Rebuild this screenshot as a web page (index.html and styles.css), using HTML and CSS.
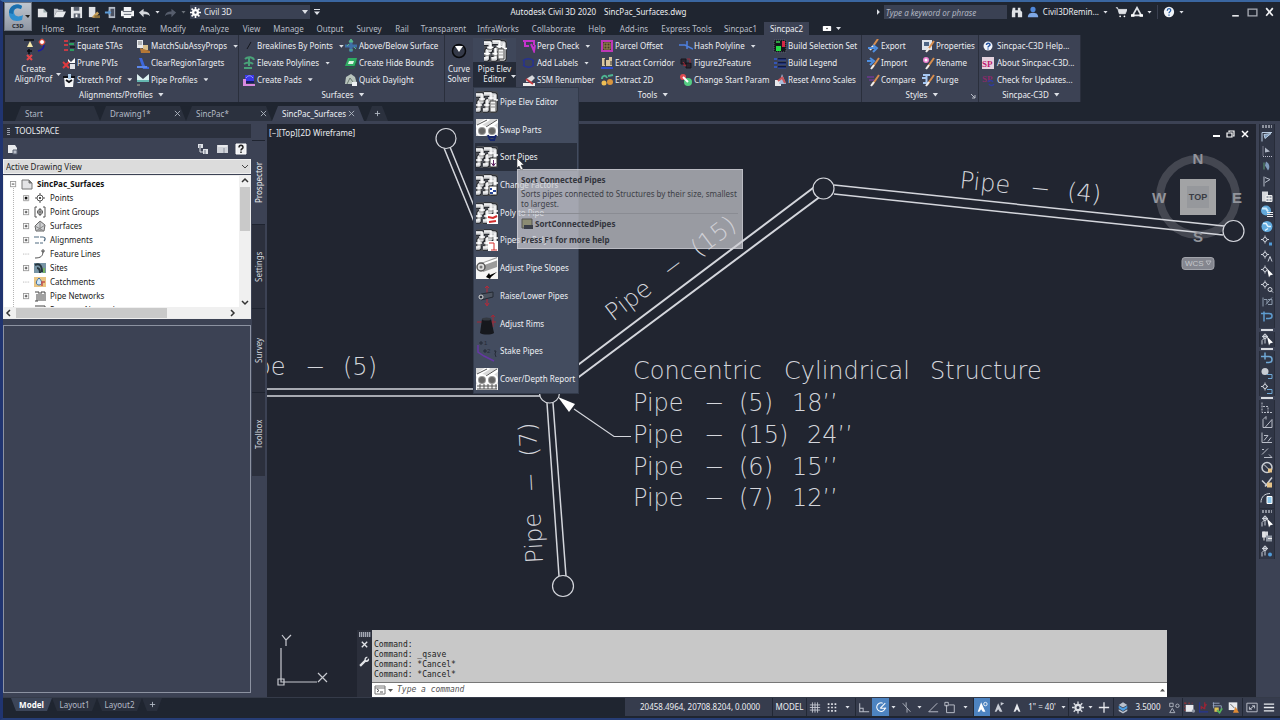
FILE: index.html
```html
<!DOCTYPE html>
<html lang="en">
<head>
<meta charset="utf-8">
<title>Autodesk Civil 3D 2020</title>
<link rel="stylesheet" href="styles.css">
</head>
<body>
<svg class="defs" aria-hidden="true">
  <symbol id="pipe" viewBox="0 0 22 22"><rect width="22" height="22" rx="2" fill="#4b4e55"/><g fill="none" stroke-linejoin="round"><path d="M0 4h6v7H3v8H0M8 3h7v7h-4v9H7M15 4h4v15h-4" stroke="#17191e" stroke-width="5"/><path d="M0 4h6v7H3v8H0M8 3h7v7h-4v9H7M15 4h4v15h-4" stroke="#d6d7d9" stroke-width="3.500"/><path d="M0 3h6v7H3v8H0M8 2h7v7h-4v9H7M19 4v15" stroke="#fff" stroke-width="1.200"/><path d="M3 8h6M12 7h6M0 14h6M8 14h6M17 9h5" stroke="#fff" stroke-width="1.500"/><path d="M3 10h6M12 9h6M0 16h6M8 16h6" stroke="#777" stroke-width=".8"/></g></symbol>
  <symbol id="tubes" viewBox="0 0 22 22"><rect width="22" height="22" fill="#d9d9d9"/><path d="M0 8 13 0M10 9 22 2M4 5l9-6M15 7l7-5" stroke="#fff" stroke-width="3"/><path d="M1 6 11 1M10 8 21 1" stroke="#555"/><circle cx="6" cy="12" r="5" fill="#999" stroke="#fff" stroke-width="2"/><circle cx="16" cy="12" r="5" fill="#999" stroke="#fff" stroke-width="2"/><circle cx="6" cy="12" r="3" fill="#666"/><circle cx="16" cy="12" r="3" fill="#666"/></symbol>
  <symbol id="pick" viewBox="0 0 14 14"><path d="M5 1v4M2 4h6M5 5 2 8v4M5 6v5" stroke="#c9ced8" fill="none"/><circle cx="5" cy="4" r="2" fill="none" stroke="#d4d8df"/></symbol>
  <symbol id="pen" viewBox="0 0 14 14"><path d="M6 12 13 2" stroke="#d88e4e" stroke-width="2"/><path d="m5 13 3-4" stroke="#eee" stroke-width="2"/></symbol>
  <symbol id="plusbox" viewBox="0 0 8 8"><rect x=".5" y=".5" width="6" height="6" fill="#fff" stroke="#999"/><path d="M2 3.500h3M3.500 2v3" stroke="#333"/></symbol>
</svg>

<header class="top">
  <button class="app" aria-label="Application menu"><svg width="26" height="27" viewBox="0 0 26 27"><path d="M17 3C10-1 4 4 4 10s5 10 13 7l1-5c-5 3-9 1-9-3s4-5 7-3z" fill="#2f8fd0"/><path d="M17 3C10-1 4 4 4 10l4 1c0-5 3-7 8-5z" fill="#1a6fae"/><path d="m20 12h5l-2 3z" fill="#222"/><text x="7" y="25" class="app-code">C3D</text></svg></button>
  <div class="toprows">
    <div class="titlebar">
      <div class="qat">
        <button aria-label="New"><svg viewBox="0 0 14 14"><path d="M2 3h6l4 4v5H2z" fill="#e3e5e8"/><path d="M8 3v4h4" fill="#9aa"/></svg></button>
        <button aria-label="Open"><svg viewBox="0 0 14 14"><path d="M1 3h4l1 1h5v2H4l-3 6z" fill="#c4c7cd"/><path d="M4 6h10l-3 6H1z" fill="#e8eaed"/></svg></button>
        <button aria-label="Save"><svg viewBox="0 0 14 14"><path d="M1 1h12v12H1z" fill="#e3e5e8"/><path d="M4 1h6v4H4zM4 8h7v5H4z" fill="#59606e"/><path d="M6 9h2v3H6z" fill="#fff"/></svg></button>
        <button aria-label="Save as"><svg viewBox="0 0 14 14"><path d="M2 1h7v11H2z" fill="#dfe1e5"/><path d="m5 12 6-6 2 2-5 5z" fill="#c9a15a"/><path d="M8 10h6v3H8z" fill="#8b6f3c"/></svg></button>
        <button aria-label="Import"><svg viewBox="0 0 14 14"><path d="M5 1h7v12H5z" fill="#b5bcc8"/><path d="M7 3h4v8H7z" fill="#4b5263"/><path d="M1 6h4V4l3 3-3 3V8H1z" fill="#5c9ad6"/></svg></button>
        <button aria-label="Plot"><svg viewBox="0 0 14 14"><path d="M3 1h8v4H3zM0 5h14v6H0zM3 10h8v3H3z" fill="#f3f4f6"/><path d="M2 6h10M3 9h8" stroke="#555d6b"/></svg></button>
        <button aria-label="Undo"><svg viewBox="0 0 14 14"><path d="M1 7l5-4v3c4 0 6 1 7 5-2-2-4-2-7-2v3z" fill="#d5d8dd"/></svg></button>
        <i class="dn small"></i>
        <button aria-label="Redo"><svg viewBox="0 0 14 14"><path d="M13 7 8 3v3C4 6 2 7 1 11c2-2 4-2 7-2v3z" fill="#565d6c"/></svg></button>
        <i class="dn small dim"></i>
        <button class="workspace"><svg viewBox="0 0 14 14"><circle cx="7" cy="7" r="3" fill="none" stroke="#fff" stroke-width="3"/><path d="M7 0v3M7 11v3M0 7h3M11 7h3M2 2l2 2M10 10l2 2M2 12l2-2M10 4l2-2" stroke="#fff" stroke-width="2"/></svg><span>Civil 3D</span><i class="dn"></i></button>
        <i class="dn bar"></i>
      </div>
      <div class="title"><span>Autodesk Civil 3D 2020</span><span>SincPac_Surfaces.dwg</span></div>
      <div class="info">
        <i class="rt"></i>
        <input class="search" type="text" placeholder="Type a keyword or phrase" aria-label="Search help">
        <button aria-label="Find"><svg viewBox="0 0 14 14"><path d="M2 2h3v3h3V2h3v3l2 2v6H8V8H5v5H1V7z" fill="#dfe2e6"/></svg></button>
        <button class="user"><svg viewBox="0 0 14 14"><circle cx="7" cy="4" r="3" fill="#4f86d8"/><path d="M1 13c0-4 3-5 6-5s6 1 6 5z" fill="#7fa8e6"/></svg><span>Civil3DRemin...</span><i class="dn small"></i></button>
        <button class="cart" aria-label="App store"><svg viewBox="0 0 14 14"><path d="M1 2h2l2 7h7l2-5H4" fill="#dfe2e6" stroke="#dfe2e6"/><circle cx="6" cy="12" r="1" fill="#fff"/><circle cx="11" cy="12" r="1" fill="#fff"/></svg></button>
        <button aria-label="Autodesk app"><svg viewBox="0 0 14 14"><path d="m7 2 5 9H2z" fill="none" stroke="#dfe2e6" stroke-width="2"/><path d="M0 11h4M10 11h4" stroke="#fff" stroke-width="3"/></svg></button>
        <i class="dn small"></i><i class="vsep"></i>
        <button aria-label="Help"><svg viewBox="0 0 14 14"><circle cx="7" cy="7" r="6" fill="#f1f4f8"/><path d="M5 5.500c0-3 4-3 4-.5 0 2-2 1.500-2 3.500M7 10v1.500" fill="none" stroke="#275fa8" stroke-width="1.500"/></svg></button>
        <i class="dn small"></i>
      </div>
      <div class="win">
        <button aria-label="Minimize"><svg viewBox="0 0 10 10"><path d="M2 8h6" stroke="#e5e7ea" stroke-width="1.500"/></svg></button>
        <button aria-label="Maximize"><svg viewBox="0 0 10 10"><path d="M1 2h8v6H1z" fill="none" stroke="#a9adb5" stroke-width="1.200"/></svg></button>
        <button aria-label="Close"><svg viewBox="0 0 10 10"><path d="m2 1 6 7M8 1 2 8" stroke="#f1f2f4" stroke-width="1.500"/></svg></button>
      </div>
    </div>
    <nav class="tabs">
      <button>Home</button><button>Insert</button><button>Annotate</button><button>Modify</button><button>Analyze</button><button>View</button><button>Manage</button><button>Output</button><button>Survey</button><button>Rail</button><button>Transparent</button><button>InfraWorks</button><button>Collaborate</button><button>Help</button><button>Add-ins</button><button>Express Tools</button><button>Sincpac1</button><button class="on">Sincpac2</button>
      <button class="ribbon-min" aria-label="Minimize ribbon"><svg viewBox="0 0 10 6"><rect width="10" height="6" rx="1" fill="#fff"/><circle cx="5" cy="3" r="1" fill="#333"/></svg><i class="dn small"></i></button>
    </nav>
  </div>
</header>

<section class="ribbon">
  <div class="panel p-align">
    <div class="cmds">
      <button class="big create"><svg width="24" height="24" viewBox="0 0 24 24"><path d="M2 2h10M7 11v5M5 13h5" stroke="#0b0c10" stroke-width="1.500"/><path d="m8 3 3 6H5z" fill="#f5e9ab"/><path d="m5 17 5 5M10 17l-5 5" stroke="#e4464a" stroke-width="2"/><path d="m20 0 1 3 3 1-3 1-1 3-1-3-3-1 3-1z" fill="#ff9a8a"/><circle cx="20" cy="4" r="2.500" fill="#fff" stroke="#e43a2a"/><path d="M22 7c0 3-2 5-6 6" stroke="#1919a8" stroke-width="1.500" fill="none"/></svg><span>Create<br>Align/Prof</span><i class="dn small"></i></button>
      <div class="col">
        <button><svg viewBox="0 0 14 14"><path d="M2 2h4M2 6h4M2 11h4" stroke="#c33b45" stroke-width="2"/><path d="M8 2h5M8 8h5" stroke="#1d1f27" stroke-width="2"/><path d="M7 5h5M8 11h4" stroke="#2b9e5f" stroke-width="2"/></svg>Equate STAs</button>
        <button><svg viewBox="0 0 14 14"><path d="M6 3l3 3 4-4v5H6z" fill="#fff"/><path d="M8 8h5v5H8z" fill="#e1e3e8"/><path d="m1 6 6 6M7 6l-6 6" stroke="#e03b3f" stroke-width="2"/></svg>Prune PVIs</button>
        <button><svg viewBox="0 0 14 14"><path d="M2 4h10l-1 10H3z" fill="#f5f6f8"/><path d="M1 4h5M8 4h5M4 7l3 2 3-2" stroke="#101218" stroke-width="2" fill="none"/><path d="M6 1h3v5H6z" fill="#a9c9e6"/></svg>Stretch Prof<i class="dn small"></i></button>
      </div>
      <div class="col">
        <button><svg viewBox="0 0 14 14"><path d="M1 1h6v8H1z" fill="#e8eaee"/><path d="M2 3h4M2 5h4" stroke="#777"/><path d="M7 6h5v5H7z" fill="#d9bf8c"/><path d="m4 9 10 3v2H5z" fill="#b57836"/></svg>MatchSubAssyProps<i class="dn small"></i></button>
        <button><svg viewBox="0 0 14 14"><path d="M3 2h3l3 8 4 1v2H7z" fill="#3c67dd"/><path d="M1 11h10" stroke="#5c87ea" stroke-width="2"/></svg>ClearRegionTargets</button>
        <button><svg viewBox="0 0 14 14"><path d="M1 1v8h12V1L7 6z" fill="#dcf0f0"/><path d="M1 7h12v2H1z" fill="#65b7b1"/><path d="M1 12h3" stroke="#777" stroke-width="2"/></svg>Pipe Profiles<i class="dn small"></i></button>
      </div>
    </div>
    <button class="ptitle">Alignments/Profiles<i class="dn"></i></button>
  </div>
  <div class="panel p-surf">
    <div class="cmds">
      <div class="col">
        <button><svg viewBox="0 0 14 14"><path d="m5 10 4-7" stroke="#14161d"/></svg>Breaklines By Points<i class="dn small"></i></button>
        <button><svg viewBox="0 0 14 14"><path d="M3 3c3-3 8-2 9 1M7 1v9M2 8c3-2 7-2 9 0M2 12h8" stroke="#49a178" stroke-width="2" fill="none"/></svg>Elevate Polylines<i class="dn small"></i></button>
        <button><svg viewBox="0 0 14 14"><path d="M3 2h9v6H3z" fill="#3b37e8"/><path d="M4 5c2-3 5-3 7 0" stroke="#9da2ff" fill="none"/><path d="M1 6h3v5h9v2H1z" fill="#d98ae0"/><path d="M4 9h8" stroke="#181a66" stroke-width="2"/></svg>Create Pads<i class="dn small"></i></button>
      </div>
      <div class="col">
        <button><svg viewBox="0 0 14 14"><path d="M7 1v12M1 7h12" stroke="#3f6fa6" stroke-width="3"/><path d="m7 0 2 3H5zM3 7l2-2M10 8l2 2M5 11h4" fill="#57b98b" stroke="#57b98b"/></svg>Above/Below Surface</button>
        <button><svg viewBox="0 0 14 14"><path d="M4 2h9l-2 8H1z" fill="#2fae63"/><path d="M5 5h5l-1 3H4z" fill="#dff7e6"/><path d="M1 12h9l3-7" stroke="#176e3a" fill="none"/></svg>Create Hide Bounds</button>
        <button><svg viewBox="0 0 14 14"><path d="m2 4 5-3 4 3 2 7H1z" fill="#b8c4bd"/><path d="m3 11 3-6 3 4" stroke="#68776e" fill="none"/><path d="M8 9h5v4H8z" fill="#eef1f4"/></svg>Quick Daylight</button>
      </div>
    </div>
    <button class="ptitle">Surfaces<i class="dn"></i></button>
  </div>
  <div class="panel p-tools">
    <div class="cmds">
      <button class="big curve"><svg width="24" height="24" viewBox="0 0 24 24"><circle cx="12" cy="13" r="6.500" fill="#343948" stroke="#08090c" stroke-width="1.500"/><path d="M8 8h8l-4 6z" fill="#fff"/></svg><span>Curve<br>Solver</span></button>
      <div class="split">
        <button class="big pressed"><svg width="24" height="24" viewBox="0 0 24 24"><use href="#pipe" x="1" y="1" width="23" height="23"/><path d="M15 11h6v10h-6z" fill="#f4f4f4" stroke="#444"/><path d="M16 14h4M16 17h4" stroke="#999"/></svg><span>Pipe Elev<br>Editor</span><i class="dn small"></i></button>
        <div class="menu" role="menu">
          <button role="menuitem"><svg viewBox="0 0 22 22"><use href="#pipe"/><path d="M14 10h6v11h-6z" fill="#f1f1f1" stroke="#444"/><path d="M15 13h4M15 16h4" stroke="#888"/></svg>Pipe Elev Editor</button>
          <button role="menuitem"><svg viewBox="0 0 22 22"><use href="#tubes"/><path d="M0 17h22v5H0z" fill="#434c5e"/><path d="M12 18h8M14 21h5M12 16l2 5M20 16l-2 5" stroke="#18286e" stroke-width="2"/></svg>Swap Parts</button>
          <button role="menuitem" class="hot"><svg viewBox="0 0 22 22"><use href="#pipe"/><path d="M14 12h7v9h-7z" fill="#fff" stroke="#333"/><path d="M17.500 14v6M15.500 17l2 3 2-3" stroke="#5e2461" fill="none"/></svg>Sort Pipes</button>
          <button role="menuitem"><svg viewBox="0 0 22 22"><use href="#pipe"/><path d="M13 12h8v9h-8z" fill="#fff" stroke="#333"/><path d="M14 14h2v2h-2zM17 16h3v2h-3zM14 18h3v2h-3z" fill="#2a4799"/></svg>Change Factors</button>
          <button role="menuitem"><svg viewBox="0 0 22 22"><use href="#pipe"/><path d="M11 12h11v10H11z" fill="#fff"/><path d="m12 15 5 1 4-2M13 20l7-1" stroke="#d32c2c" stroke-width="2" fill="none"/></svg>Poly to Pipe</button>
          <button role="menuitem"><svg viewBox="0 0 22 22"><use href="#pipe"/><path d="M12 12h10v10H12z" fill="#fff"/><path d="M13 14h5v7M15 21h6" stroke="#d32c2c" fill="none"/></svg>Pipes to Poly</button>
          <button role="menuitem"><svg viewBox="0 0 22 22"><path d="M0 0h22v22H0z" fill="#f5f5f5"/><path d="M5 6 21 0v10L7 15z" fill="#9b9b9b"/><path d="M8 7 22 2" stroke="#fff" stroke-width="2"/><circle cx="5" cy="10" r="4" fill="#ddd" stroke="#555" stroke-width="1.500"/><circle cx="5" cy="10" r="1.500" fill="#777"/><path d="m10 20 3-4 1 2 7-3-6 5-1 2z" fill="#000"/></svg>Adjust Pipe Slopes</button>
          <button role="menuitem"><svg viewBox="0 0 22 22"><path d="M11 1v19M9 3l2-2 2 2M9 18l2 3 2-3" stroke="#b82939" fill="none"/><path d="M5 9 17 7v5L5 15z" fill="#4c535f" stroke="#252a34"/><circle cx="5" cy="12" r="2" fill="#2a2f3a" stroke="#ddd"/></svg>Raise/Lower Pipes</button>
          <button role="menuitem"><svg viewBox="0 0 22 22"><path d="M1 9h19M17 2v12M15 4l2-2 2 2" stroke="#a52634" fill="none"/><path d="M6 6h9l3 14c-3 2-11 2-14 0z" fill="#16181d"/><ellipse cx="10.500" cy="6" rx="4.500" ry="1.500" fill="#343941"/></svg>Adjust Rims</button>
          <button role="menuitem"><svg viewBox="0 0 22 22"><path d="M2 5v7l6 4 10 5" stroke="#6637a4" stroke-width="1.500" fill="none"/><path d="M3 3h4M5 1v4M7 11h4M9 9v4M18 11h2l-1 3 1 3" stroke="#252a37" fill="none"/><text x="8" y="5" class="tiny">1</text><text x="11" y="13" class="tiny">2</text></svg>Stake Pipes</button>
          <button role="menuitem"><svg viewBox="0 0 22 22"><use href="#tubes"/><path d="M0 16h22v6H0z" fill="#f5f5f5"/><path d="M1 18h20M1 21h20M4 16v5M8 16v5M12 16v5M16 16v5M20 16v5" stroke="#555"/></svg>Cover/Depth Report</button>
        </div>
      </div>
      <div class="col">
        <button><svg viewBox="0 0 14 14"><path d="M1 2h11v4M3 2v5h4M9 5l3 7 1-6" stroke="#c433cc" stroke-width="2" fill="none"/></svg>Perp Check<i class="dn small"></i></button>
        <button><svg viewBox="0 0 14 14"><path d="M1 5c2-3 8-3 11 0M1 9c3 3 8 3 11 0M2 4v6M11 4v6" stroke="#263291" stroke-width="1.500" fill="none"/></svg>Add Labels<i class="dn small"></i></button>
        <button><svg viewBox="0 0 14 14"><path d="M1 10h12v3H1z" fill="#eee"/><path d="M4 9c0-5 5-5 6-7l3 3-4 4z" fill="#d9dadd"/><path d="m4 6 7 5" stroke="#c53b41" stroke-width="2"/></svg>SSM Renumber</button>
      </div>
      <div class="col">
        <button><svg viewBox="0 0 14 14"><path d="M2 2h10v10H2z" fill="#443a28" stroke="#bd38b7" stroke-width="2"/><path d="M4 4h6v6H4zM7 4v6M4 7h6" stroke="#9a8553" fill="none"/></svg>Parcel Offset</button>
        <button><svg viewBox="0 0 14 14"><path d="M2 2h3v8H2zM6 4h3v6H6zM9 1h3v9H9z" fill="#d9c59d"/><path d="M5 3v6M11 5v4" stroke="#333"/><path d="M1 12h12" stroke="#2e4ccc" stroke-width="2"/></svg>Extract Corridor</button>
        <button><svg viewBox="0 0 14 14"><path d="M2 6c0-4 4-4 5-1M8 3l5-1" stroke="#4fb592" stroke-width="2" fill="none"/><circle cx="4" cy="10" r="2.500" fill="#f0bf55"/><circle cx="10" cy="9" r="3" fill="#d8953e"/></svg>Extract 2D</button>
      </div>
      <div class="col">
        <button><svg viewBox="0 0 14 14"><path d="M0 6h6l8 4M8 2v8" stroke="#4e80df" stroke-width="1.500" fill="none"/></svg>Hash Polyline<i class="dn small"></i></button>
        <button><svg viewBox="0 0 14 14"><path d="M2 3h5v5H2zM7 7h5v5H7z" fill="#2a2530" stroke="#17151b"/><path d="m4 6 3 4-3-1M8 3h3v4" stroke="#a32937" fill="none"/></svg>Figure2Feature</button>
        <button><svg viewBox="0 0 14 14"><circle cx="4" cy="4" r="3" fill="#e04b52"/><circle cx="9" cy="9" r="4" fill="#54cd82"/><path d="m4 4 5 5" stroke="#fff" stroke-width="2"/></svg>Change Start Param</button>
      </div>
      <div class="col">
        <button><svg viewBox="0 0 14 14"><path d="M1 1h12v12H1z" fill="#15171d" stroke="#5b6070" stroke-dasharray="1"/><path d="M3 7h5v5H3z" fill="#25db45"/><path d="M9 2h3v6H9z" fill="#d42745"/><path d="M3 3h4" stroke="#31a044" stroke-width="2"/></svg>Build Selection Set</button>
        <button><svg viewBox="0 0 14 14"><path d="M1 2h3v2H1zM1 6h3v2H1zM1 10h3v2H1z" fill="#3556b6"/><path d="M5 3h8M5 7h8M5 11h8" stroke="#101940" stroke-width="2"/><path d="M5 4h8M5 8h8M5 12h8" stroke="#2f4ba7"/></svg>Build Legend</button>
        <button><svg viewBox="0 0 14 14"><path d="M2 7h6v6H2z" fill="#e7e8ec"/><path d="m9 1 4 10H6z" fill="#a8bddb"/><path d="m9 4 3 6M5 8l5-4" stroke="#cc5459" stroke-width="2"/></svg>Reset Anno Scales</button>
      </div>
    </div>
    <button class="ptitle">Tools<i class="dn"></i></button>
  </div>
  <div class="panel p-styles">
    <div class="cmds">
      <div class="col">
        <button><svg viewBox="0 0 14 14"><use href="#pen" x="-1" y="-2"/><path d="M2 9h7M7 6l4 3-4 4" stroke="#4f8fe0" stroke-width="2" fill="none"/></svg>Export</button>
        <button><svg viewBox="0 0 14 14"><use href="#pen"/><path d="M1 5h5M4 2l4 3-4 4" stroke="#4f8fe0" stroke-width="2" fill="none"/></svg>Import</button>
        <button><svg viewBox="0 0 14 14"><use href="#pen"/><path d="M1 4h7M3 7h5" stroke="#6c3b91" stroke-width="1.500"/></svg>Compare</button>
      </div>
      <div class="col">
        <button><svg viewBox="0 0 14 14"><path d="M1 1h10v10H1z" fill="#dfe3ea"/><path d="M3 3h5v4H3z" fill="#4d6484"/><use href="#pen"/></svg>Properties</button>
        <button><svg viewBox="0 0 14 14"><circle cx="5" cy="4" r="3" fill="#ee7fd0"/><circle cx="5" cy="4" r="1.500" fill="#fff"/><use href="#pen"/></svg>Rename</button>
        <button><svg viewBox="0 0 14 14"><path d="M2 2h7M5.500 2v8M2 10h6M1 5h4" stroke="#a6c7f2" stroke-width="2"/><use href="#pen"/></svg>Purge</button>
      </div>
    </div>
    <button class="ptitle">Styles<i class="dn"></i></button>
    <svg class="launcher" viewBox="0 0 6 6"><path d="m1 1 4 4M5 2v3H2" stroke="#b9bdc7" fill="none"/></svg>
  </div>
  <div class="panel p-sinc">
    <div class="cmds">
      <div class="col">
        <button><svg viewBox="0 0 14 14"><circle cx="6" cy="7" r="4.500" fill="#f2f5fa"/><path d="M4.500 6c0-2.500 3.500-2.500 3.500 0 0 1-2 1-2 2.500M6 9.500v1" fill="none" stroke="#2452a0" stroke-width="1.500"/></svg>Sincpac-C3D Help...</button>
        <button><svg viewBox="0 0 14 14"><path d="M0 1h12v12H0z" fill="#e5d3df"/><text x="0" y="11" class="sp">SP</text></svg>About Sincpac-C3D...</button>
        <button><svg viewBox="0 0 14 14"><text x="0" y="9" class="sp dim">SP</text><path d="M6 9c1-2 4-2 5 0M12 11c-1 2-4 2-5 0" stroke="#2f3c9c" stroke-width="1.500" fill="none"/></svg>Check for Updates...</button>
      </div>
    </div>
    <button class="ptitle">Sincpac-C3D<i class="dn"></i></button>
  </div>
</section>

<nav class="files">
  <button class="f-start">Start</button>
  <button class="f-doc">Drawing1*<svg class="x" viewBox="0 0 8 8"><path d="m1 1 6 6M7 1 1 7"/></svg></button>
  <button class="f-doc">SincPac*<svg class="x" viewBox="0 0 8 8"><path d="m1 1 6 6M7 1 1 7"/></svg></button>
  <button class="f-doc on">SincPac_Surfaces<svg class="x" viewBox="0 0 8 8"><path d="m1 1 6 6M7 1 1 7"/></svg></button>
  <button class="plus" aria-label="New drawing"><svg class="x" viewBox="0 0 8 8"><path d="M4 1v6M1 4h6"/></svg></button>
</nav>

<main class="work">
  <aside class="palette">
    <div class="pal-main">
      <h2><i class="griph"></i>TOOLSPACE</h2>
      <div class="pal-tools">
        <svg viewBox="0 0 12 12"><path d="M2 2h7l2 3v5H2z" fill="#e9ebee"/><path d="M7 7h4v4H7z" fill="#b9bec9" stroke="#555c6d"/></svg>
        <svg class="push" viewBox="0 0 12 12"><path d="M1 1h5v4H1zM6 6h5v5H6z" fill="#dfe2e7"/><path d="M3 5v4h3" stroke="#dfe2e7" fill="none"/><path d="M3 2v3M8 7v4" stroke="#6b7383"/></svg>
        <svg viewBox="0 0 12 12"><path d="M1 2h11v8H1z" fill="#cfd2d8"/><path d="M2 3h9" stroke="#fff"/><path d="M8 5v5" stroke="#8b909c"/></svg>
        <svg viewBox="0 0 12 12"><path d="M1 1h10v10H1z" fill="#f1f2f4" stroke="#fff"/><path d="M4 4.500c0-3 4-3 4 0 0 1.500-2 1-2 3M6 8.500V10" stroke="#222" stroke-width="1.500" fill="none"/></svg>
      </div>
      <div class="pick"><select class="view" aria-label="View"><option>Active Drawing View</option></select><svg viewBox="0 0 8 8"><path d="m1 2 3 3 3-3" fill="none" stroke="#444"/></svg></div>
      <div class="treebox">
        <ul class="tree">
          <li class="root"><svg class="ex" viewBox="0 0 8 8"><rect x=".5" y=".5" width="6" height="6" fill="#fff" stroke="#999"/><path d="M2 3.500h3" stroke="#333"/></svg><svg viewBox="0 0 12 12"><path d="M1 2h7l3 3v6H1z" fill="#e4e4e6" stroke="#777"/><path d="M8 2v3h3" fill="#777" stroke="#777"/></svg>SincPac_Surfaces</li>
          <li><svg class="ex" viewBox="0 0 8 8"><path d="M.5.500h6v6h-6z" fill="#fff" stroke="#999"/><path d="M2 2h3v3H2z" fill="#111"/></svg><svg viewBox="0 0 12 12"><path d="M6 1v10M1 6h10" stroke="#555"/><circle cx="6" cy="6" r="3" fill="#fff" stroke="#555"/><path d="M5 5h2v2H5z" fill="#555"/></svg>Points</li>
          <li><svg class="ex"><use href="#plusbox"/></svg><svg viewBox="0 0 12 12"><path d="M3 1H1v10h2M9 1h2v10H9" stroke="#555" fill="none"/><circle cx="6" cy="6" r="2.500" fill="#fff" stroke="#555"/><path d="M6 2v8M3 6h6" stroke="#555"/></svg>Point Groups</li>
          <li><svg class="ex"><use href="#plusbox"/></svg><svg viewBox="0 0 12 12"><path d="m1 6 5-5 5 4-1 6H2z" fill="#cfd1d3" stroke="#666"/><path d="M6 1v10M1 6l9 5M11 5 2 11" stroke="#888"/></svg>Surfaces</li>
          <li><svg class="ex"><use href="#plusbox"/></svg><svg viewBox="0 0 12 12"><path d="M0 3h5M6 3h3c2 0 3 2 1 4M9 9H6M5 9H1" stroke="#4f6a80" fill="none" stroke-width="1.200"/></svg>Alignments</li>
          <li><svg class="ex" viewBox="0 0 8 8"><path d="M0 3.500h8" stroke="#aaa" stroke-dasharray="1"/></svg><svg viewBox="0 0 12 12"><path d="M1 10c6 0 8-2 8-7M7 3h4M9 1v4" stroke="#555" fill="none"/></svg>Feature Lines</li>
          <li><svg class="ex"><use href="#plusbox"/></svg><svg viewBox="0 0 12 12"><path d="M0 1h12v10H0z" fill="#7794a5"/><path d="M1 3c4-2 7 0 7 7M3 6c2 0 3 2 3 5" stroke="#26363f" stroke-width="2" fill="none"/><path d="M9 6h2v5H9z" fill="#72b262"/></svg>Sites</li>
          <li><svg class="ex" viewBox="0 0 8 8"><path d="M0 3.500h8" stroke="#aaa" stroke-dasharray="1"/></svg><svg viewBox="0 0 12 12"><path d="M0 1h12v10H0z" fill="#e9c584"/><path d="M5 2c4 4 3 7 0 7s-4-3 0-7z" fill="#cfe7fa" stroke="#3d6e9f"/><path d="M8 10V6h3" stroke="#c5534b" stroke-width="1.500" fill="none"/></svg>Catchments</li>
          <li><svg class="ex"><use href="#plusbox"/></svg><svg viewBox="0 0 12 12"><path d="M1 2h4v9M3 4v7M7 11V2h4v9M9 4v7M1 11h3" stroke="#444" fill="none"/></svg>Pipe Networks</li>
          <li><svg class="ex" viewBox="0 0 8 8"></svg><svg viewBox="0 0 12 12"><path d="M1 2h10v4M3 4v7M7 11V4" stroke="#444" fill="none"/></svg>Pressure Networks</li>
        </ul>
        <div class="vbar"><svg viewBox="0 0 10 10"><path d="m2 6 3-3 3 3" stroke="#333" stroke-width="1.500" fill="none"/></svg><i></i><svg viewBox="0 0 10 10"><path d="m2 4 3 3 3-3" stroke="#333" stroke-width="1.500" fill="none"/></svg></div>
        <div class="hbar"><svg viewBox="0 0 10 10"><path d="M6 2 3 5l3 3" stroke="#333" stroke-width="1.500" fill="none"/></svg><i></i><svg viewBox="0 0 10 10"><path d="m4 2 3 3-3 3" stroke="#333" stroke-width="1.500" fill="none"/></svg></div>
      </div>
      <div class="preview"></div>
    </div>
    <div class="vtabs"><button class="on">Prospector</button><button>Settings</button><button>Survey</button><button>Toolbox</button></div>
  </aside>

  <section class="canvas">
    <svg class="drawing" viewBox="267 124 989 573" preserveAspectRatio="xMinYMin slice" role="img" aria-label="Pipe network plan">
      <circle cx="1198" cy="197" r="38" fill="none" stroke="#444751" stroke-width="8"/>
      <g class="ln">
        <path d="M450 147 552 398M444 148 546 398" stroke-width="1.500"/>
        <path d="M546 389 817 185M552 397 829 190" stroke-width="2"/>
        <path d="M834 185 1224 226M834 194 1223 235" stroke-width="1.500"/>
        <path d="M267 389H545M267 396H545" stroke-width="1.500"/>
        <path d="M547 403 559 576M553 403 566 576" stroke-width="1.500"/>
        <path d="M574 409 614 436.500H631"/>
        <g fill="#212530"><circle cx="446" cy="138.500" r="10"/><circle cx="823.500" cy="188.500" r="10.500"/><circle cx="1233.500" cy="231" r="10.500"/><circle cx="549.500" cy="393" r="10"/><circle cx="563" cy="586" r="10.500"/></g>
        <path d="M281 648v34h36M278 679h6v6h-6z" stroke="#c8cad0"/>
        <path d="m282 635 4 5 5-5M286 640v6M318 673l9 9M327 673l-9 9" stroke="#c8cad0"/>
      </g>
      <path d="m558 397 17 7-6 8z" fill="#fff"/>
      <g class="cad">
        <text y="379"><tspan x="633">Concentric</tspan> <tspan x="784">Cylindrical</tspan> <tspan x="930">Structure</tspan></text>
        <text y="411"><tspan x="633">Pipe</tspan> <tspan x="704">−</tspan> <tspan x="739">(5)</tspan> <tspan x="792">18’’</tspan></text>
        <text y="443"><tspan x="633">Pipe</tspan> <tspan x="704">−</tspan> <tspan x="739">(15)</tspan> <tspan x="807">24’’</tspan></text>
        <text y="475"><tspan x="633">Pipe</tspan> <tspan x="704">−</tspan> <tspan x="739">(6)</tspan> <tspan x="792">15’’</tspan></text>
        <text y="506"><tspan x="633">Pipe</tspan> <tspan x="704">−</tspan> <tspan x="739">(7)</tspan> <tspan x="792">12’’</tspan></text>
        <text y="375"><tspan x="235">Pipe</tspan> <tspan x="305">−</tspan> <tspan x="343">(5)</tspan></text>
        <text transform="translate(959 188) rotate(6)"><tspan x="0">Pipe</tspan> <tspan x="71">−</tspan> <tspan x="108">(4)</tspan></text>
        <text transform="translate(613 322) rotate(-37)"><tspan x="0">Pipe</tspan> <tspan x="71">−</tspan> <tspan x="107">(15)</tspan></text>
        <text transform="translate(543 563) rotate(-93)"><tspan x="0">Pipe</tspan> <tspan x="71">−</tspan> <tspan x="107">(7)</tspan></text>
      </g>
      <rect x="1180" y="179" width="36" height="36" fill="#a2a3a5"/><rect x="1187" y="186" width="22" height="22" fill="#96989c"/>
      <g class="compass"><text x="1198" y="164">N</text><text x="1198" y="242">S</text><text x="1159" y="203">W</text><text x="1237" y="203">E</text></g>
      <text x="1198" y="200" class="cube">TOP</text>
      <rect x="1182" y="257.500" width="32" height="12" rx="3" fill="#84868f" stroke="#a2a4ab"/><text x="1185" y="266" class="wcs">WCS</text><path d="M1206 261h5l-2.500 4z" fill="none" stroke="#b8bac0"/>
    </svg>
    <div class="vp">[−][Top][2D Wireframe]</div>
    <div class="vpwin">
      <svg viewBox="0 0 10 10"><path d="M1 7h7" stroke="#fff" stroke-width="2"/></svg>
      <svg viewBox="0 0 10 10"><path d="M1 4h5v4H1zM3 3V2h5v5H7" fill="none" stroke="#fff" stroke-width="1.200"/></svg>
      <svg viewBox="0 0 10 10"><path d="m2 2 6 6M8 2 2 8" stroke="#fff" stroke-width="1.500"/></svg>
    </div>
    <div class="cmdwin">
      <div class="cmdside">
        <i class="gripd"></i>
        <svg viewBox="0 0 10 10"><path d="m2 2 6 6M8 2 2 8" stroke="#e2e4e8" stroke-width="1.500"/></svg>
        <svg class="wrench" viewBox="0 0 10 10"><path d="m1 9 5-5" stroke="#e2e4e8" stroke-width="2"/><path d="M8 1 6 3l1 1 2-2c1 3-2 4-4 3V3c0-2 2-3 3-2z" fill="#e2e4e8"/></svg>
      </div>
      <div class="cmdmain">
        <pre>Command:
Command: _qsave
Command: *Cancel*
Command: *Cancel*</pre>
        <div class="cmdline"><svg viewBox="0 0 20 10"><path d="M1 1h10v8H1zM1 3h10" fill="none" stroke="#777"/><path d="m3 4 2 1.500L3 7M6 7h3" stroke="#555" fill="none"/><path d="M14 4h5l-2.500 3z" fill="#555"/></svg><input type="text" placeholder="Type a command" aria-label="Command"><i class="up"></i></div>
      </div>
    </div>
  </section>

  <aside class="rail">
    <div class="rgroup g1"><i class="gripr"></i>
      <svg viewBox="0 0 14 14"><path d="M2 3h10M2 3v9M4 5l7-1-6 5z" stroke="#b9cbe0" fill="#7b98b8"/></svg>
      <svg viewBox="0 0 14 14"><path d="M3 2v10h9" stroke="#bbc" stroke-dasharray="1" fill="none"/><path d="m5 3 5 4-5 1z" fill="#aeb5c4"/></svg>
      <svg viewBox="0 0 14 14"><path d="M4 3v7" stroke="#8fa" stroke-opacity=".5"/><path d="M6 2c4 2 4 7 2 9L5 6z" fill="#7f9bbb"/></svg>
      <svg viewBox="0 0 14 14"><path d="M4 2v10M5 3l5 2-5 3" stroke="#b6bdca" fill="none"/></svg>
      <svg viewBox="0 0 14 14"><path d="M2 2h6v10H2z" fill="#d7d9de"/><path d="M6 6h6v6H6zM6 9h6M9 6v6" fill="#99a0ad" stroke="#eee"/></svg>
      <svg viewBox="0 0 14 14"><circle cx="6" cy="6" r="5" fill="#63a9db"/><path d="M2 4h4l2 3" stroke="#cdebff" stroke-width="2" fill="none"/><path d="M7 8h6M7 10h6M7 12h6" stroke="#eee"/></svg>
      <svg viewBox="0 0 14 14"><circle cx="7" cy="7" r="5.500" fill="#62abdf"/><path d="M3 4h3l2 3h3M5 11l3-2" stroke="#e0f3ff" stroke-width="1.500" fill="none"/></svg>
      <svg viewBox="0 0 14 14"><circle cx="5" cy="5" r="2" fill="none" stroke="#d4d8df"/><path d="M5 1v2M5 7v2M1 5h2M7 5h2" stroke="#c9ced8"/><path d="M9 8h3v3H9z" fill="#519bd8"/></svg>
      <svg viewBox="0 0 14 14"><circle cx="5" cy="5" r="2" fill="none" stroke="#d4d8df"/><path d="M5 1v2M5 7v2M1 5h2M7 5h2M8 12l2-5 2 5" stroke="#c9ced8" fill="none"/></svg>
      <svg viewBox="0 0 14 14"><circle cx="5" cy="5" r="2" fill="none" stroke="#d4d8df"/><path d="M5 1v2M5 7v2M1 5h2" stroke="#c9ced8"/><path d="m7 4 6 6-3 1-1 2z" fill="#fff"/></svg>
      <svg viewBox="0 0 14 14"><circle cx="5" cy="5" r="2" fill="none" stroke="#d4d8df"/><path d="M5 1v2M5 7v2M1 5h2M7 5h2M11 11l2 2" stroke="#c9ced8"/><circle cx="10" cy="10" r="2" fill="none" stroke="#d4d8df"/></svg>
      <svg viewBox="0 0 14 14"><path d="M3 3v9M4 5h3v4M6 10l6-7M8 5h4v5H8" stroke="#8d9bad" fill="none"/></svg>
      <svg viewBox="0 0 14 14"><path d="M4 2v10M1 4h8c4 0 4 5 0 5H6" stroke="#5e9bce" fill="none" stroke-width="1.500"/></svg>
    </div>
    <i class="rsep"></i>
    <div class="rgroup"><svg viewBox="0 0 14 14"><use href="#pick"/><path d="m7 4 6 6-3 1-1 2z" fill="#fff"/></svg></div>
    <i class="rsep"></i>
    <div class="rgroup">
      <svg viewBox="0 0 14 14"><path d="M5 1v7M1 5h8c4 0 4 6 0 6H6" stroke="#6fa8d6" fill="none" stroke-width="1.500"/></svg>
      <svg viewBox="0 0 14 14"><circle cx="5" cy="5" r="3.500" fill="#c9cdd4"/><path d="M7 8h5v4H8" stroke="#6fa8d6" fill="none"/></svg>
      <svg viewBox="0 0 14 14"><circle cx="5" cy="5" r="2" fill="none" stroke="#d4d8df"/><path d="M5 1v2M5 7v2M1 5h2M7 5h1" stroke="#c9ced8"/><path d="M7 8h5v4H7" stroke="#6fa8d6" fill="none"/></svg>
    </div>
    <i class="rsep"></i>
    <div class="rgroup g3">
      <svg viewBox="0 0 14 14"><path d="M2 2v10h10M3 6h5v6" stroke="#b9bdc8" fill="none" stroke-dasharray="2 1"/></svg>
      <svg viewBox="0 0 14 14"><path d="M3 12V4l3-3v3M3 12h9V4L5 12" stroke="#b9bdc8" fill="none"/></svg>
      <svg viewBox="0 0 14 14"><path d="M2 2v10h10M4 5h4l-4 5M8 11l3-4" stroke="#b9bdc8" fill="none"/></svg>
      <svg viewBox="0 0 14 14"><path d="M2 9 8 3M4 12h8l-3-3M2 4h2" stroke="#b9bdc8" fill="none"/></svg>
      <svg viewBox="0 0 14 14"><circle cx="7" cy="7" r="5" fill="none" stroke="#c9cdd4" stroke-width="1.500"/><path d="m4 4 5 5" stroke="#ddd"/><path d="M8 8h4v4H8z" fill="#e7c489"/></svg>
      <svg viewBox="0 0 14 14"><path d="m2 5 6 6M12 2 5 11" stroke="#c9cdd4" stroke-width="1.500"/><path d="M7 7h5v5H7z" fill="#e7c489"/></svg>
      <svg viewBox="0 0 14 14"><path d="M1 12c0-6 4-9 9-9" stroke="#c9cdd4" fill="none"/><path d="M7 6h5v7H7z" fill="#8ec8ec" stroke="#fff"/></svg>
    </div>
    <div class="rgroup"><i class="gripr"></i>
      <svg viewBox="0 0 14 14"><use href="#pick"/><path d="m7 4 6 6-3 1-1 2z" fill="#fff"/></svg>
      <svg viewBox="0 0 14 14"><path d="M2 2h6v6H2z" fill="#d7d9de"/><path d="M6 6h6v6H6z" fill="#8f96a3"/><path d="M4 2v9M8 9h4" stroke="#eee"/></svg>
      <svg viewBox="0 0 14 14"><use href="#pick"/><circle cx="10" cy="10" r="2" fill="#519bd8"/></svg>
    </div>
  </aside>

  <div class="tip" role="tooltip">
    <strong>Sort Connected Pipes</strong>
    <p>Sorts pipes connected to Structures by their size, smallest to largest.</p>
    <hr>
    <div class="cmdname"><svg viewBox="0 0 12 12"><path d="M1 1h10v9H1z" fill="#8c8c73" stroke="#555"/><path d="M3 7h9v4H3z" fill="#3b3f49"/></svg><strong>SortConnectedPipes</strong></div>
    <strong>Press F1 for more help</strong>
  </div>
  <svg class="pointer" viewBox="0 0 8 12"><path d="M0 0v10l2-2 2 4 2-1-2-4h3z" fill="#fff" stroke="#333" stroke-width=".5"/></svg>
</main>

<footer class="status">
  <nav class="layouts"><button class="on">Model</button><button>Layout1</button><button>Layout2</button><button class="add" aria-label="New layout"><svg class="x" viewBox="0 0 8 8"><path d="M4 1v6M1 4h6"/></svg></button></nav>
  <div class="stat">
    <span class="coords">20458.4964, 20708.8204, 0.0000</span>
    <button class="c34 sep">MODEL</button>
    <button class="c17 sep" aria-label="Grid"><svg viewBox="0 0 14 14"><path d="M4 1v12M7 1v12M10 1v12M1 4h12M1 7h12M1 10h12" stroke="#c9cdd6"/></svg></button>
    <button class="c17" aria-label="Snap"><svg viewBox="0 0 14 14"><path d="M2 3h11M2 7h11M2 11h11" stroke="#e2e4e9" stroke-width="2" stroke-dasharray="2 2"/></svg></button><i class="dn small c17"></i>
    <button class="c17 sep" aria-label="Ortho"><svg viewBox="0 0 14 14"><path d="M2 2v10h11M2 8h4v4" stroke="#b9bdc8" fill="none" stroke-width="1.200"/></svg></button>
    <button class="c17 lit" aria-label="Polar"><svg viewBox="0 0 14 14"><path d="M12 7a5 5 0 1 1-3-5M6 8l6-6M6 8h7" stroke="#fff" fill="none" stroke-width="1.200"/></svg></button><i class="dn small c10"></i>
    <button class="c17" aria-label="Isodraft"><svg viewBox="0 0 14 14"><path d="m2 2 9 10M6 1v5M7 8v5" stroke="#b9bdc8"/></svg></button><i class="dn small c10"></i>
    <button class="c17" aria-label="Tracking"><svg viewBox="0 0 14 14"><path d="M12 2 2 12h11" stroke="#c9cdd6" fill="none"/></svg></button>
    <button class="c17" aria-label="Object snap"><svg viewBox="0 0 14 14"><path d="M3 4v9h9V4H6M1 1h4v4H1z" stroke="#c9cdd6" fill="none"/></svg></button><i class="dn small c17"></i>
    <button class="c17 lit sep" aria-label="Annotation visibility"><svg viewBox="0 0 14 14"><path d="M6 1 2 12h2l2-3 2 3h3z" fill="#fff"/><circle cx="11" cy="3" r="2" fill="none" stroke="#fff"/></svg></button>
    <button class="c18" aria-label="Auto scale"><svg viewBox="0 0 14 14"><path d="M6 2 2 12h2l2-3 2 3h3zM9 1l4 1-4 3z" fill="#c9cdd6"/></svg></button>
    <button class="c17" aria-label="Annotation scale"><svg viewBox="0 0 14 14"><path d="M7 2 3 12h2l2-3 2 3h2z" fill="#e9ebef"/></svg></button>
    <button class="c34">1" = 40'</button><i class="dn small c10"></i>
    <button class="c18 sep" aria-label="Workspace"><svg viewBox="0 0 14 14"><circle cx="7" cy="7" r="3" fill="none" stroke="#dcdfe5" stroke-width="2.500"/><path d="M7 0v3M7 11v3M0 7h3M11 7h3M2 2l2 2M10 10l2 2M2 12l2-2M10 4l2-2" stroke="#dcdfe5" stroke-width="1.500"/></svg></button><i class="dn small c10"></i>
    <button class="c18" aria-label="Monitor"><svg viewBox="0 0 14 14"><path d="M7 1v12M1 7h12" stroke="#e9ebef" stroke-width="1.500"/></svg></button>
    <button class="c18 sep" aria-label="Surface level"><svg viewBox="0 0 14 14"><path d="m7 1 5 3-5 3-5-3zM2 9l5 3 5-3v2l-5 3-5-3z" fill="#b9c1cc"/><path d="m2 5 5 3 5-3v3l-5 3-5-3z" fill="#4d9ee0"/></svg></button>
    <button class="c34">3.5000</button>
    <button class="c17" aria-label="Quick properties"><svg viewBox="0 0 14 14"><path d="M2 2h4v4H2zM5 8l3 5H2z" stroke="#b9bdc8" fill="none"/><circle cx="11" cy="5" r="2" fill="none" stroke="#b9bdc8"/></svg></button>
    <button class="c14 sep" aria-label="Units"><svg viewBox="0 0 14 14"><path d="M2 4h9v8H2z" fill="#e9ebef"/><path d="M1 1v11M1 2h9" stroke="#a33" stroke-dasharray="2"/><circle cx="11" cy="11" r="2" fill="#8f96a3"/></svg></button>
    <button class="c14" aria-label="Quick view"><svg viewBox="0 0 14 14"><path d="M3 1v12M3 12h10" stroke="#263591" stroke-width="1.500"/><path d="M5 9V6l3 2 3-5M9 1v8" stroke="#962536" stroke-width="1.500" fill="none"/></svg></button>
    <button class="c14" aria-label="Hardware"><svg viewBox="0 0 14 14"><path d="M2 2h8M3 1v7M2 5h10v5" stroke="#9aa8c4" fill="none"/><path d="M4 7h5v5H4z" fill="#e0c156"/><path d="m7 10 3 3 3-5" stroke="#57b35a" stroke-width="2" fill="none"/></svg></button>
    <button class="c18" aria-label="Isolate"><svg viewBox="0 0 14 14"><path d="M2 1h10v9H2z" fill="#e9ebef"/><path d="m4 3 5 5" stroke="#555"/><path d="m10 6 4 7H7z" fill="#e08a35"/></svg></button>
    <button class="c18 sep" aria-label="Clean screen"><svg viewBox="0 0 14 14"><path d="M1 2h12v10H1zM4 9l6-4M7 5h3v3M4 6v3h3" stroke="#c9cdd6" fill="none"/></svg></button>
    <button class="c18" aria-label="Customize"><svg viewBox="0 0 14 14"><path d="M1 3h12M1 7h12M1 11h12" stroke="#e9ebef" stroke-width="1.500"/></svg></button>
  </div>
</footer>
</body>
</html>
```
FILE: styles.css
```css
* { box-sizing: border-box; }

body {
  margin: 0;
  height: 100vh;
  display: flex;
  flex-direction: column;
  overflow: hidden;
  background: #1f2530;
  border-top: 2px solid #3a66a0;
  border-left: 3px solid #203470;
  border-bottom: 2px solid #263d75;
  font: 8px/12px "Noto Sans", "Open Sans", sans-serif;
  color: #eceef2;
}

.defs { position: absolute; width: 0; height: 0; }

button {
  font: inherit;
  color: inherit;
  background: none;
  border: 0;
  padding: 0;
  margin: 0;
  white-space: nowrap;
}

svg { display: block; flex: none; }
input, select { font: inherit; }

/* small triangles */
.dn, .rt, .up { flex: none; width: 6px; height: 4px; background: #dde0e6; clip-path: polygon(0 0, 100% 0, 50% 100%); }
.dn.small { width: 5px; height: 3px; }
.dn.dim { opacity: .4; }
.rt { width: 3px; height: 6px; clip-path: polygon(0 0, 100% 50%, 0 100%); }
.up { width: 5px; height: 3px; background: #555; clip-path: polygon(50% 0, 100% 100%, 0 100%); }
.x { width: 7px; height: 7px; fill: none; stroke: #b4bac6; }

/* header */
.top { display: flex; flex: none; height: 33px; }
.app { width: 28px; height: 29px; margin-left: 1px; background: linear-gradient(#bfc6d0, #8f96a2); border: 1px solid #6b7280; }
.app-code { font-size: 6px; font-weight: 700; fill: #22262e; }
.toprows { flex: 1; min-width: 0; display: flex; flex-direction: column; }
.titlebar { display: flex; align-items: center; height: 20px; }
.qat { display: flex; align-items: center; gap: 4px; padding-left: 4px; }
.qat svg { width: 13px; height: 13px; }
.qat .workspace { display: flex; align-items: center; gap: 3px; width: 120px; height: 14px; padding: 0 2px 0 0; background: #3a4153; text-align: left; }
.workspace span { flex: 1; }
.workspace svg { width: 11px; height: 11px; }
.dn.bar { height: 6px; clip-path: polygon(0 0, 100% 0, 100% 18%, 0 18%, 0 40%, 100% 40%, 50% 100%, 0 40%); }
.title { flex: 1; display: flex; justify-content: center; gap: 8px; white-space: nowrap; }
.info { display: flex; align-items: center; gap: 4px; }
.info svg { width: 12px; height: 12px; }
.search { width: 123px; height: 14px; border: 0; padding: 0 2px; background: #3a4153; color: #ccc; font-style: italic; }
.search::placeholder { color: #b0b5c0; }
.user { display: flex; align-items: center; gap: 4px; }
.cart { margin-left: 3px; }
.vsep { width: 1px; height: 14px; margin: 0 1px; background: #3a4050; }
.win { display: flex; gap: 6px; padding: 0 5px 0 46px; }
.win svg { width: 11px; height: 11px; }

.tabs {
  display: grid;
  grid-template-columns: 36px 34px 48px 40px 43px 31px 43px 40px 38px 28px 55px 54px 57px 30px 44px 61px 47px 45px 45px;
  height: 13px;
  padding-left: 3px;
  line-height: 12px;
  color: #b9bec8;
}
.tabs .on { background: #3c4254; color: #eceef2; }
.ribbon-min { display: flex; align-items: center; justify-content: center; gap: 4px; }
.ribbon-min svg { width: 10px; height: 5px; }

/* ribbon */
.ribbon { display: flex; flex: none; padding-left: 2px; }
.panel { position: relative; background: #3c4254; padding-top: 3px; height: 67px; border-right: 1px solid #2a2f3c; }
.cmds { display: flex; height: 50px; }
.col { display: flex; flex: none; flex-direction: column; }
.col button { display: flex; align-items: center; height: 17px; gap: 1px; }
.col button .dn { margin-left: 5px; }
.col svg { width: 14px; height: 14px; }
.big { display: flex; flex: none; flex-direction: column; align-items: center; position: relative; width: 57px; line-height: 10px; }
.big .dn { position: absolute; right: 3px; bottom: 9px; }
.create { gap: 2px; }
.create .dn { right: 1px; bottom: 12px; }
.ptitle { display: flex; align-items: center; justify-content: center; gap: 5px; width: 100%; height: 13px; }
.p-align { width: 234px; }
.p-align .col:nth-child(2) { width: 74px; }
.p-surf { width: 206px; padding-left: 3px; }
.p-surf .col:first-child { width: 102px; }
.p-tools { width: 417px; }
.p-tools .col { width: 78px; }
.p-tools .col:nth-child(4) { width: 79px; }
.p-tools .col:nth-child(5) { width: 94px; }
.curve { width: 28px; gap: 2px; }
.split { position: relative; flex: none; width: 43px; margin-right: 6px; }
.pressed { width: 43px; height: 49px; gap: 2px; background: linear-gradient(#3f475a 48%, #252b38 48%); }
.pressed .dn { right: 0; }
.p-styles { width: 117px; padding-left: 4px; }
.p-styles .col:first-child { width: 55px; }
.p-sinc { width: 102px; padding-left: 3px; }
.launcher { position: absolute; right: 2px; bottom: 3px; width: 6px; height: 6px; }
.sp { font: 700 9px "Liberation Serif", serif; fill: #bf1b72; }
.sp.dim { fill: #8b2a6b; }
.tiny { font: 6px "Liberation Sans", sans-serif; fill: #252a37; }

.menu {
  position: absolute;
  z-index: 5;
  left: 0;
  top: 49px;
  width: 106px;
  height: 307px;
  display: grid;
  grid-template: repeat(11, minmax(0, 1fr)) / minmax(0, 1fr);
  padding: 0 1px;
  background: #434c5f;
  border: 1px solid #323a4a;
}
.menu button { display: flex; align-items: center; gap: 2px; padding-left: 1px; color: #eef0f4; }
.menu svg { width: 22px; height: 22px; }
.menu .hot { background: #292f3c; }

/* drawing tabs */
.files { display: flex; flex: none; height: 19px; padding: 4px 0 0 12px; color: #b4bac6; }
.files button { display: flex; align-items: center; height: 15px; padding: 0 5px 0 10px; background: #2b313e; clip-path: polygon(6px 0, calc(100% - 6px) 0, 100% 100%, 0 100%); }
.files .f-start { width: 85px; }
.files .f-doc { justify-content: space-between; width: 86px; }
.files .f-doc.on { width: 92px; background: #3c4254; color: #eef0f4; padding: 0 9px 0 10px; }
.files .plus { justify-content: center; padding: 0; width: 22px; margin-left: 2px; }

/* work area */
.work { position: relative; flex: 1; min-height: 0; display: flex; border-top: 3px solid #3c4254; }
.palette { display: flex; flex: none; width: 264px; background: #3c4254; }
.pal-main { flex: 1; display: flex; flex-direction: column; padding: 0 1px 4px 0; }
.palette h2 { display: flex; align-items: center; gap: 5px; height: 14px; margin: 0; padding-left: 4px; background: #2b303d; font: inherit; }
.griph { width: 3px; height: 7px; background: repeating-linear-gradient(#9aa0ad 0 1px, transparent 1px 2px); }
.pal-tools { display: flex; align-items: center; gap: 7px; height: 21px; padding: 0 4px 0 3px; }
.pal-tools svg { width: 12px; height: 12px; }
.push { margin-left: auto; }
.pick { position: relative; display: flex; }
.pick svg { position: absolute; right: 2px; top: 4px; width: 8px; height: 8px; pointer-events: none; }
.view { appearance: none; flex: 1; height: 15px; border: 1px solid #f0f0f0; border-radius: 0; padding: 0 2px; color: #222; background: #dcdcdc; }
.treebox { display: grid; grid-template-columns: 1fr 11px; grid-template-rows: 1fr 11px; height: 144px; margin: 1px 0 6px; background: #fff; border: 1px solid #eee; }
.tree { margin: 0; padding: 1px 0 0 6px; list-style: none; overflow: hidden; height: 131px; color: #222; background: repeating-linear-gradient(#b5b5b5 0 1px, transparent 1px 2px) 9px 12px / 1px 200px no-repeat; }
.tree li { display: flex; align-items: center; height: 14px; gap: 4px; padding-left: 13px; }
.tree .root { padding-left: 0; font-weight: 700; color: #111; }
.tree svg { width: 12px; height: 12px; }
.tree .ex { width: 7px; height: 7px; }
.vbar, .hbar { display: flex; align-items: center; background: #f0f0f0; }
.vbar { flex-direction: column; }
.vbar svg, .hbar svg { width: 10px; height: 10px; }
.vbar i { width: 10px; height: 44px; margin: 1px 0 auto; background: #c9c9c9; }
.hbar { grid-column: 1 / 3; padding-right: 13px; }
.hbar i { width: 151px; height: 10px; margin: 0 auto 0 2px; background: #c9c9c9; }
.preview { flex: 1; border: 1px solid #8c92a1; }
.vtabs { width: 14px; padding-top: 16px; margin-right: 1px; }
.vtabs button { display: block; width: 13px; height: 84px; padding: 0; line-height: 13px; writing-mode: vertical-rl; transform: rotate(180deg); background: #2c303d; border: 0 solid #1f2430; border-bottom-width: 1px; color: #d2d6de; text-align: center; }
.vtabs .on { background: #3c4254; color: #eceef2; }

.canvas { position: relative; flex: 1; min-width: 0; background: #212530; overflow: hidden; }
.drawing { width: 100%; height: 100%; }
.ln { fill: none; stroke: #d4d6dc; stroke-width: 1.2; }
.cad { font: 200 24px "DejaVu Sans", sans-serif; fill: #d4d6dc; }
.compass { font: 700 15px "Liberation Sans", sans-serif; fill: #92949b; text-anchor: middle; }
.cube { font: 700 9px "Liberation Sans", sans-serif; fill: #3a3d44; text-anchor: middle; }
.wcs { font: 8px "Liberation Sans", sans-serif; fill: #c4c6cc; }
.vp { position: absolute; left: 2px; top: 3px; }
.vpwin { position: absolute; right: 6px; top: 5px; display: flex; gap: 4px; }
.vpwin svg { width: 10px; height: 10px; }

.cmdwin { position: absolute; left: 90px; right: 89px; bottom: 0; height: 67px; display: flex; }
.cmdside { width: 15px; background: #2b2f3b; display: flex; flex-direction: column; align-items: center; padding-top: 2px; }
.gripd { width: 12px; height: 5px; background: repeating-linear-gradient(90deg, #a4a8b2 0 1px, #555a68 1px 2px); }
.cmdside svg { width: 9px; height: 9px; margin-top: 3px; }
.cmdside .wrench { width: 11px; height: 11px; margin-top: 7px; }
.cmdmain { flex: 1; display: flex; flex-direction: column; font: 8px/10px "DejaVu Sans Mono", monospace; }
.cmdmain pre { flex: 1; margin: 0; padding: 10px 2px 0; font: inherit; background: #c8c8c8; color: #222; border-bottom: 1px solid #777; }
.cmdline { display: flex; align-items: center; height: 14px; gap: 3px; padding: 0 2px; background: #fff; }
.cmdline svg { width: 20px; height: 10px; }
.cmdline input { flex: 1; border: 0; padding: 0; outline: 0; font-style: italic; }
.cmdline input::placeholder { color: #555; }

.rail { flex: none; width: 24px; padding: 0 5px 0 3px; background: #3c4254; }
.rgroup { background: #303646; border: 0 solid #272c39; border-width: 0 1px; }
.rgroup svg { width: 14px; height: 15px; }
.g1 { padding-bottom: 4px; }
.g3 { padding-bottom: 3px; border-bottom-width: 1px; }
.gripr { display: block; width: 10px; height: 5px; margin: 0 2px; background: repeating-linear-gradient(90deg, #8d929e 0 2px, transparent 2px 3px) 0 1px / 10px 3px no-repeat; }
.rsep { display: block; height: 2px; margin: 1px 2px; background: #d8dbe1; }

/* tooltip */
.tip {
  position: absolute;
  z-index: 6;
  left: 514px;
  top: 45px;
  width: 226px;
  padding: 4px 0 2px 3px;
  background: rgba(205, 205, 211, .7);
  border: 1px solid rgba(220, 220, 225, .5);
  color: #3d3f47;
  line-height: 10px;
}
.tip strong { display: block; line-height: 12px; color: #33353d; }
.tip p { margin: 3px 0 4px; }
.tip hr { height: 1px; margin: 0 4px 4px 0; border: 0; background: #8a8c93; }
.cmdname { display: flex; align-items: center; gap: 2px; margin-bottom: 4px; }
.cmdname svg { width: 12px; height: 12px; }
.pointer { position: absolute; z-index: 7; left: 514px; top: 34px; width: 8px; height: 12px; }

/* status bar */
.status { display: flex; flex: none; justify-content: space-between; align-items: flex-start; height: 21px; border-top: 1px solid #353b49; }
.layouts { display: flex; height: 13px; padding-left: 8px; color: #b4bac6; }
.layouts button { width: 45px; background: #292f3c; clip-path: polygon(0 0, 100% 0, calc(100% - 5px) 100%, 5px 100%); }
.layouts .on { width: 41px; background: #3c4558; color: #fff; font-weight: 700; }
.layouts .add { display: flex; align-items: center; justify-content: center; width: 20px; }
.stat { display: flex; align-items: center; height: 18px; padding: 0 2px 0 15px; background: #363c4d; }
.coords { width: 132px; white-space: nowrap; }
.stat button { display: flex; align-items: center; justify-content: center; height: 18px; }
.stat svg { width: 12px; height: 13px; }
.stat .sep { border-left: 1px solid #222835; }
.stat .lit { background: #4d83c0; }
.c10 { width: 10px; }
.c14 { width: 14px; }
.c17 { width: 17px; }
.c18 { width: 18px; }
.c34 { width: 34px; }
.stat .dn { width: 5px; margin: 0 2px; }
.stat .dn.c17 { margin: 0 5px; }
```
